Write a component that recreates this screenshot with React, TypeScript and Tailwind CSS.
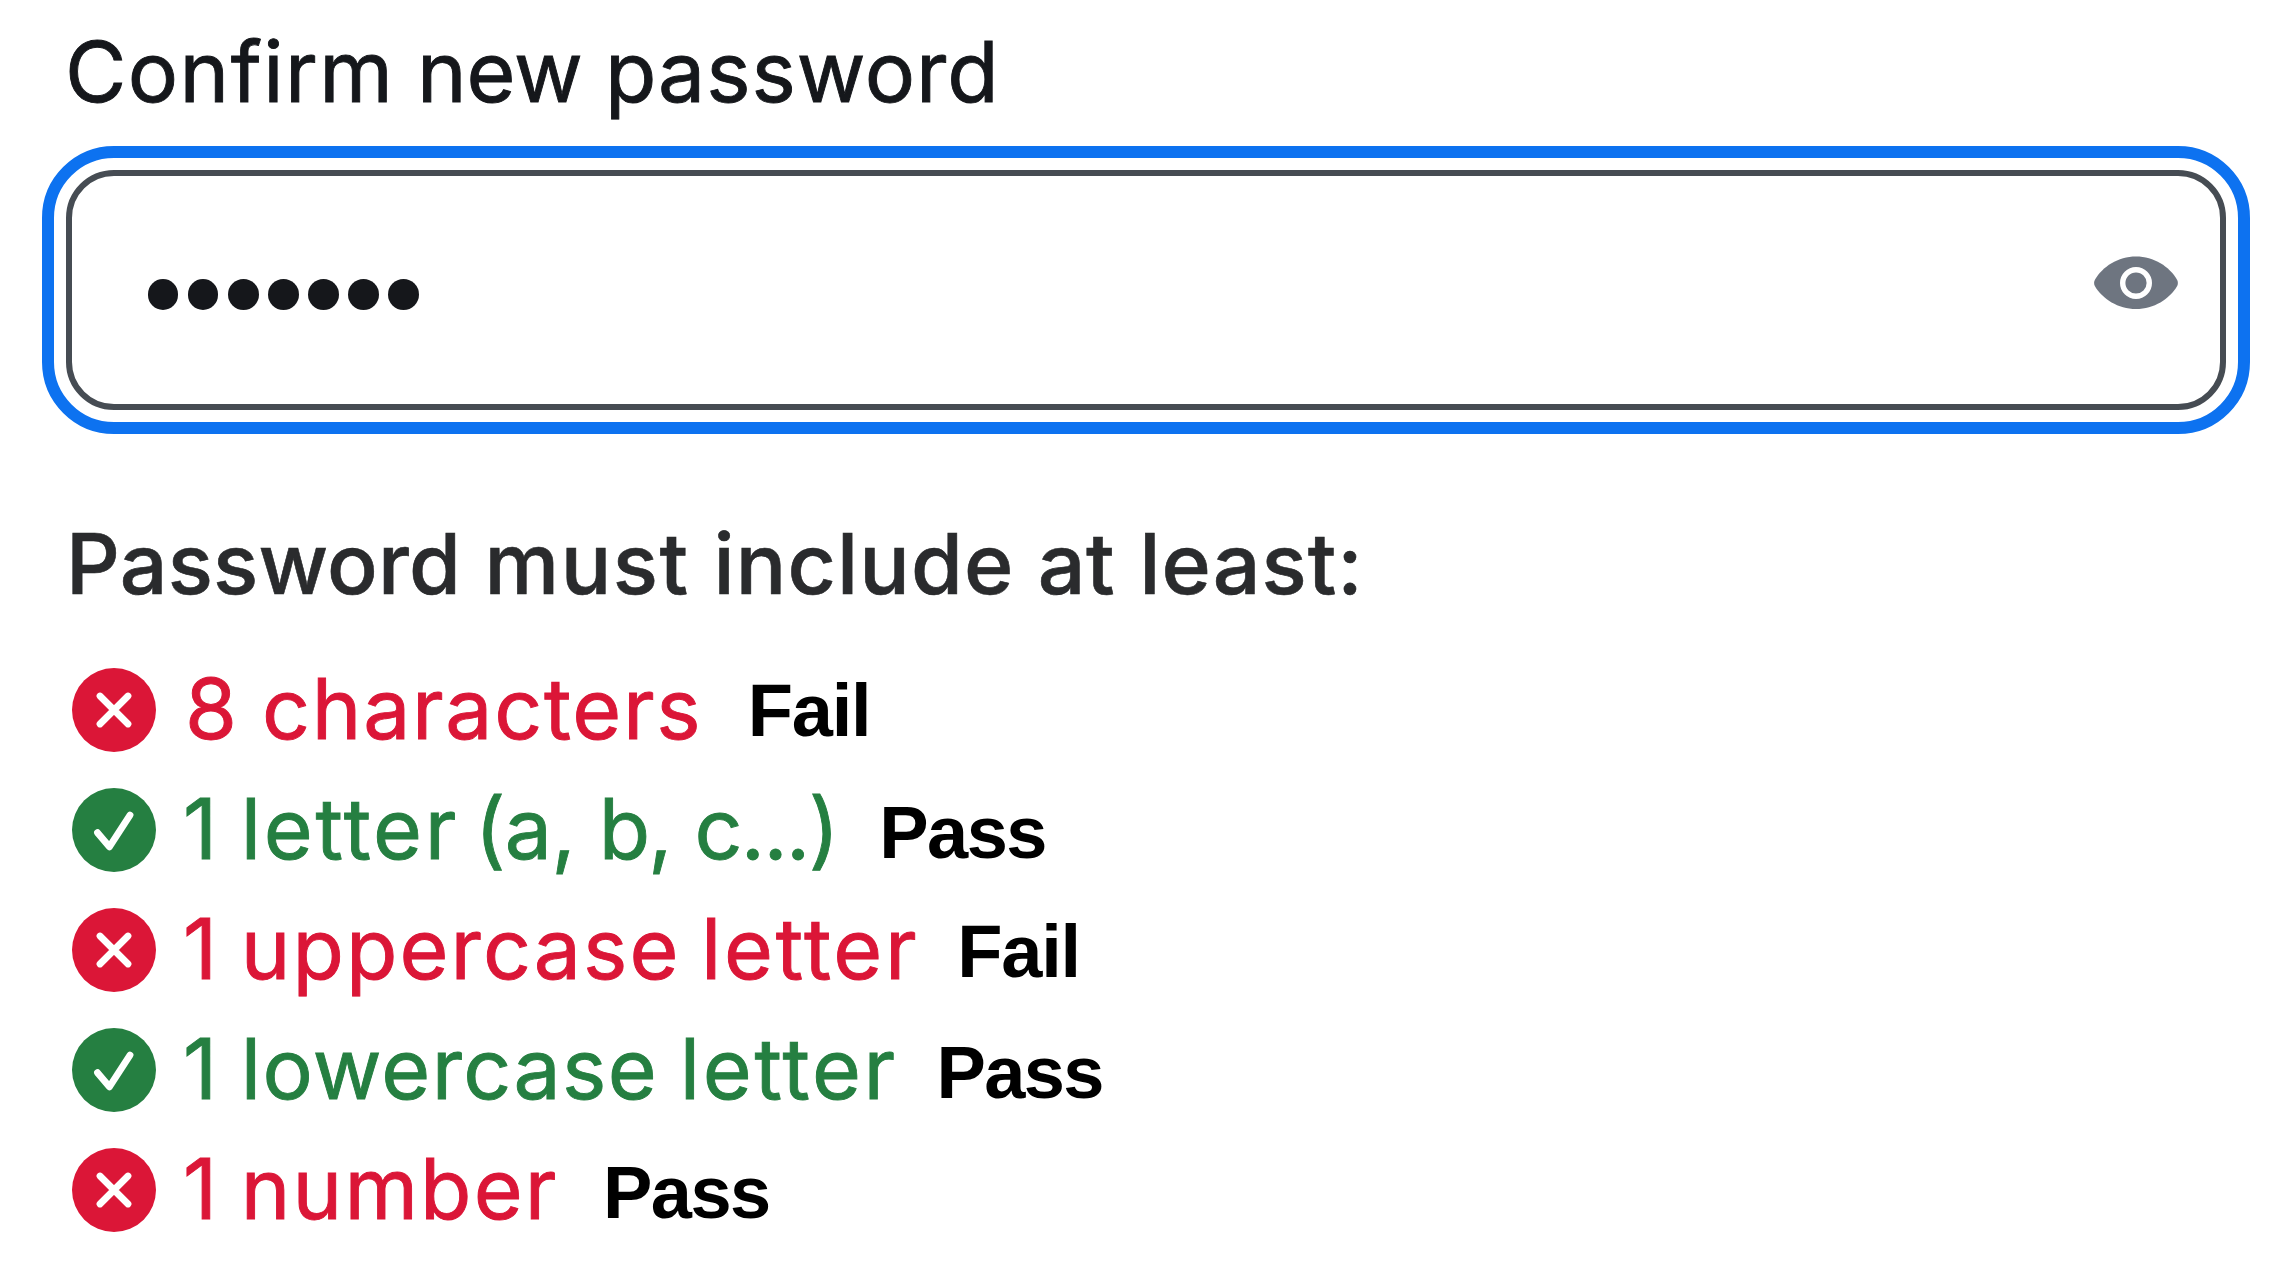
type Word = { text: string; className: string };
type Rule = { ok: boolean; words: Word[]; verdict: "Pass" | "Fail"; verdictClass: string };

const rules: Rule[] = [
  {
    ok: false,
    words: [
      { text: "8", className: "ml-[2px]" },
      { text: "characters", className: "tracking-[1.7px] ml-[1.5px]" },
    ],
    verdict: "Fail",
    verdictClass: "ml-[45.5px] top-[-3px] tracking-[-1.2px]",
  },
  {
    ok: true,
    words: [
      { text: "1", className: "" },
      { text: "letter", className: "tracking-[2.7px]" },
      { text: "(a,", className: "tracking-[-0.5px] ml-[-8px]" },
      { text: "b,", className: "tracking-[-1.83px]" },
      { text: "c...)", className: "tracking-[-1.55px]" },
    ],
    verdict: "Pass",
    verdictClass: "ml-[41.5px] top-[-1px] tracking-[-1.6px]",
  },
  {
    ok: false,
    words: [
      { text: "1", className: "" },
      { text: "uppercase", className: "tracking-[2.07px]" },
      { text: "letter", className: "tracking-[2.7px] ml-[-3px]" },
    ],
    verdict: "Fail",
    verdictClass: "ml-[38px] top-[-2px] tracking-[-1.2px]",
  },
  {
    ok: true,
    words: [
      { text: "1", className: "" },
      { text: "lowercase", className: "tracking-[1.37px]" },
      { text: "letter", className: "tracking-[2.7px] ml-[-2px]" },
    ],
    verdict: "Pass",
    verdictClass: "ml-[38.5px] top-[-1px] tracking-[-1.6px]",
  },
  {
    ok: false,
    words: [
      { text: "1", className: "" },
      { text: "number", className: "tracking-[2.14px]" },
    ],
    verdict: "Pass",
    verdictClass: "ml-[44.5px] top-[-1px] tracking-[-1.6px]",
  },
];

function Words({ words }: { words: Word[] }) {
  return (
    <>
      {words.map((w, i) => (
        <span key={i}>
          {i > 0 && " "}
          <span className={w.className}>{w.text}</span>
        </span>
      ))}
    </>
  );
}

function StatusIcon({ ok }: { ok: boolean }) {
  return (
    <svg viewBox="0 0 84 84" className="size-[84px] shrink-0" aria-hidden="true">
      <circle cx="42" cy="42" r="42" fill={ok ? "#257f41" : "#db1637"} />
      <path
        d={ok ? "M25.5 44.7 L37.4 58.8 L58 27.2" : "M28 28 L56 56 M56 28 L28 56"}
        fill="none"
        stroke="#fff"
        strokeWidth="6.8"
        strokeLinecap="round"
        strokeLinejoin="round"
      />
    </svg>
  );
}

function EyeIcon() {
  return (
    <svg viewBox="0 0 84 54" className="h-[54px] w-[84px]" aria-hidden="true">
      <path
        d="M42 0.5 C24 0.5 8.5 10.5 0.8 24 Q-0.6 27 0.8 30 C8.5 43 24 53 42 53 C60 53 75.5 43 83.2 30 Q84.6 27 83.2 24 C75.5 10.5 60 0.5 42 0.5 Z"
        fill="#6e7580"
      />
      <circle cx="42" cy="27" r="13.3" fill="none" stroke="#fff" strokeWidth="5.4" />
    </svg>
  );
}

export default function App() {
  return (
    <main className="flex h-[1278px] w-[2292px] flex-col bg-white px-[66px] font-[Inter,sans-serif] text-[84px]">
      <label className="mt-[12px] -ml-px h-[120px] leading-[120px] whitespace-nowrap text-[#15171b] [-webkit-text-stroke:0.9px]">
        <Words
          words={[
            { text: "Confirm", className: "tracking-[1.43px]" },
            { text: "new", className: "ml-[-1px]" },
            { text: "password", className: "tracking-[0.91px] ml-[-1.5px]" },
          ]}
        />
      </label>

      <div className="mt-[38px] flex h-[240px] w-[2160px] items-center justify-between rounded-[48px] border-[6px] border-[#464c53] pr-[42px] pl-[75.5px] outline-[12px] outline-offset-[12px] outline-[#0d72f0]">
        <div className="mt-[9px] flex gap-[9.2px]" role="textbox" aria-label="Confirm new password">
          {Array.from({ length: 7 }, (_, i) => (
            <span key={i} className="size-[30.9px] rounded-full bg-[#15171b]" />
          ))}
        </div>
        <button type="button" className="mb-[14px]" aria-label="Show password">
          <EyeIcon />
        </button>
      </div>

      <h2 className="mt-[94px] h-[120px] leading-[120px] font-medium whitespace-nowrap text-[#2a2b2d] [-webkit-text-stroke:0.6px]">
        <Words
          words={[
            { text: "Password", className: "tracking-[0.2px]" },
            { text: "must", className: "tracking-[1.54px] ml-[1px]" },
            { text: "include", className: "tracking-[1.1px] ml-[1.5px]" },
            { text: "at", className: "tracking-[0.6px] ml-[1px]" },
            { text: "least:", className: "tracking-[1.05px] ml-[1.5px]" },
          ]}
        />
      </h2>

      <ul className="mt-[26px] ml-[6px]">
        {rules.map((rule, i) => (
          <li key={i} className="flex h-[120px] items-center">
            <StatusIcon ok={rule.ok} />
            <p className={`mb-[3px] ml-[27px] leading-[120px] whitespace-nowrap ${rule.ok ? "text-[#257f41]" : "text-[#db1637]"}`}>
              <span className="[-webkit-text-stroke:0.9px]">
                <Words words={rule.words} />
              </span>
              <strong className={`relative font-[Liberation_Sans,sans-serif] text-[74px] leading-none font-bold text-black ${rule.verdictClass}`}>
                {rule.verdict}
              </strong>
            </p>
          </li>
        ))}
      </ul>
    </main>
  );
}
